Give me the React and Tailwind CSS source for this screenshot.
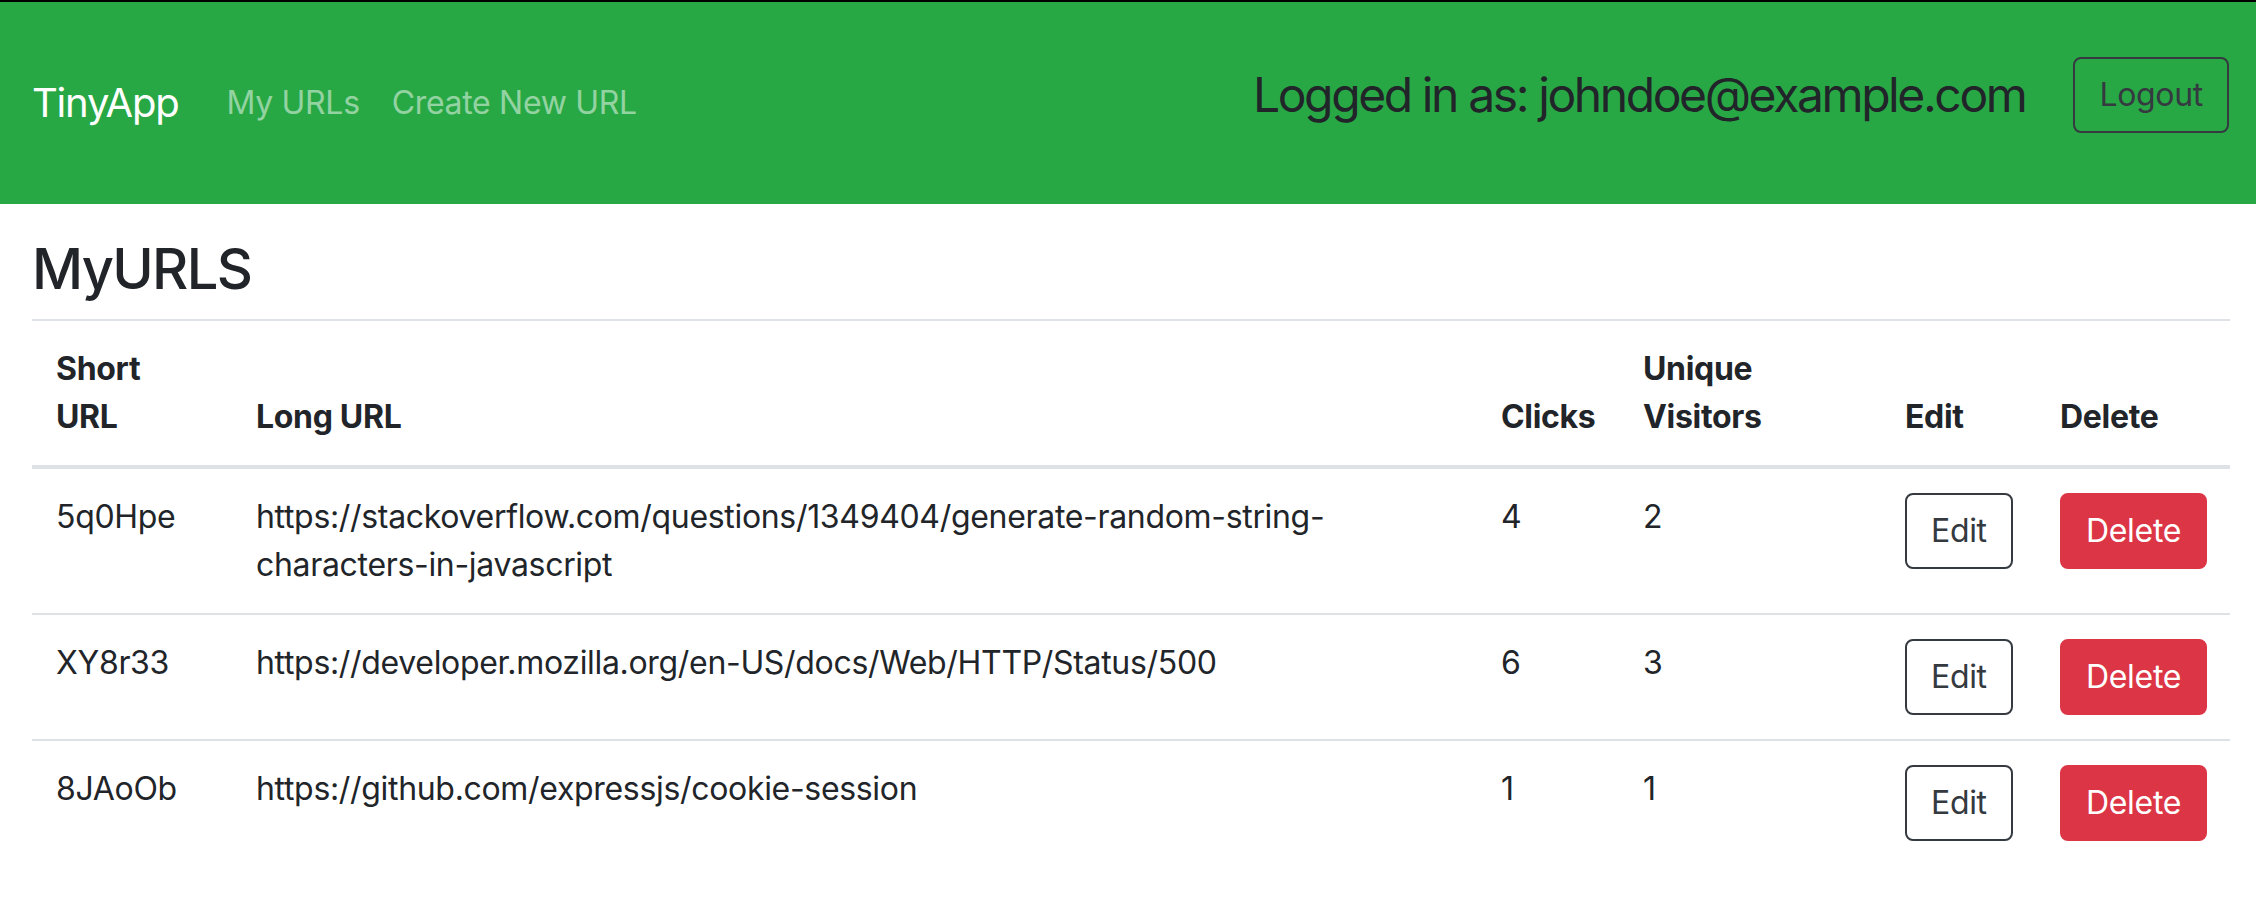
import React from 'react';

const urls = [
  {
    id: '5q0Hpe',
    longURL: 'https://stackoverflow.com/questions/1349404/generate-random-string-characters-in-javascript',
    clicks: 4,
    visitors: 2,
  },
  {
    id: 'XY8r33',
    longURL: 'https://developer.mozilla.org/en-US/docs/Web/HTTP/Status/500',
    clicks: 6,
    visitors: 3,
  },
  {
    id: '8JAoOb',
    longURL: 'https://github.com/expressjs/cookie-session',
    clicks: 1,
    visitors: 1,
  },
];

const Navbar = () => (
  <nav className="flex h-[204px] items-center justify-between border-t-2 border-black bg-[#28a745] pl-8 pr-[27px]">
    <div className="flex items-center">
      <a href="#" className="mr-8 text-[40px] leading-[60px] tracking-[-0.03em] text-white">
        TinyApp
      </a>
      <a href="#" className="px-4 text-[32px] leading-[48px] text-white/50">
        My URLs
      </a>
      <a href="#" className="px-4 text-[32px] leading-[48px] text-white/50">
        Create New URL
      </a>
    </div>
    <div className="mb-4 flex items-center gap-12">
      <span className="text-[48px] leading-[58px] tracking-[-0.05em] text-[#212529]">
        Logged in as: johndoe@example.com
      </span>
      <button className="rounded-lg border-2 border-[#343a40] px-6 py-3 text-[32px] leading-[48px] text-[#343a40]">
        Logout
      </button>
    </div>
  </nav>
);

const App = () => {
  return (
    <div className="min-h-screen bg-white font-['Inter',sans-serif] tracking-[-0.02em] text-[#212529]">
      <Navbar />
      <main className="pl-8 pr-[26px] pt-8">
        <h3 className="mb-4 text-[56px] font-medium leading-[67px] tracking-[-0.03em]">MyURLS</h3>
        <table className="w-full table-fixed text-left text-[32px] leading-[48px]">
          <thead>
            <tr className="border-t-2 border-b-4 border-[#dee2e6] align-bottom">
              <th className="w-[200px] p-6 font-bold">Short URL</th>
              <th className="w-[1245px] p-6 font-bold">Long URL</th>
              <th className="w-[142px] p-6 font-bold">Clicks</th>
              <th className="w-[262px] p-6 font-bold">Unique Visitors</th>
              <th className="w-[155px] p-6 font-bold">Edit</th>
              <th className="w-[194px] p-6 font-bold">Delete</th>
            </tr>
          </thead>
          <tbody>
            {urls.map((url, i) => (
              <tr
                key={url.id}
                className={i > 0 ? 'border-t-2 border-[#dee2e6] align-top' : 'align-top'}
              >
                <td className="p-6">{url.id}</td>
                <td className="p-6">{url.longURL}</td>
                <td className="p-6">{url.clicks}</td>
                <td className="p-6">{url.visitors}</td>
                <td className="p-6">
                  <button className="rounded-lg border-2 border-[#343a40] px-6 py-3 text-[#343a40]">
                    Edit
                  </button>
                </td>
                <td className="p-6">
                  <button className="rounded-lg border-2 border-[#dc3545] bg-[#dc3545] px-6 py-3 text-white">
                    Delete
                  </button>
                </td>
              </tr>
            ))}
          </tbody>
        </table>
      </main>
    </div>
  );
};

export default App;
